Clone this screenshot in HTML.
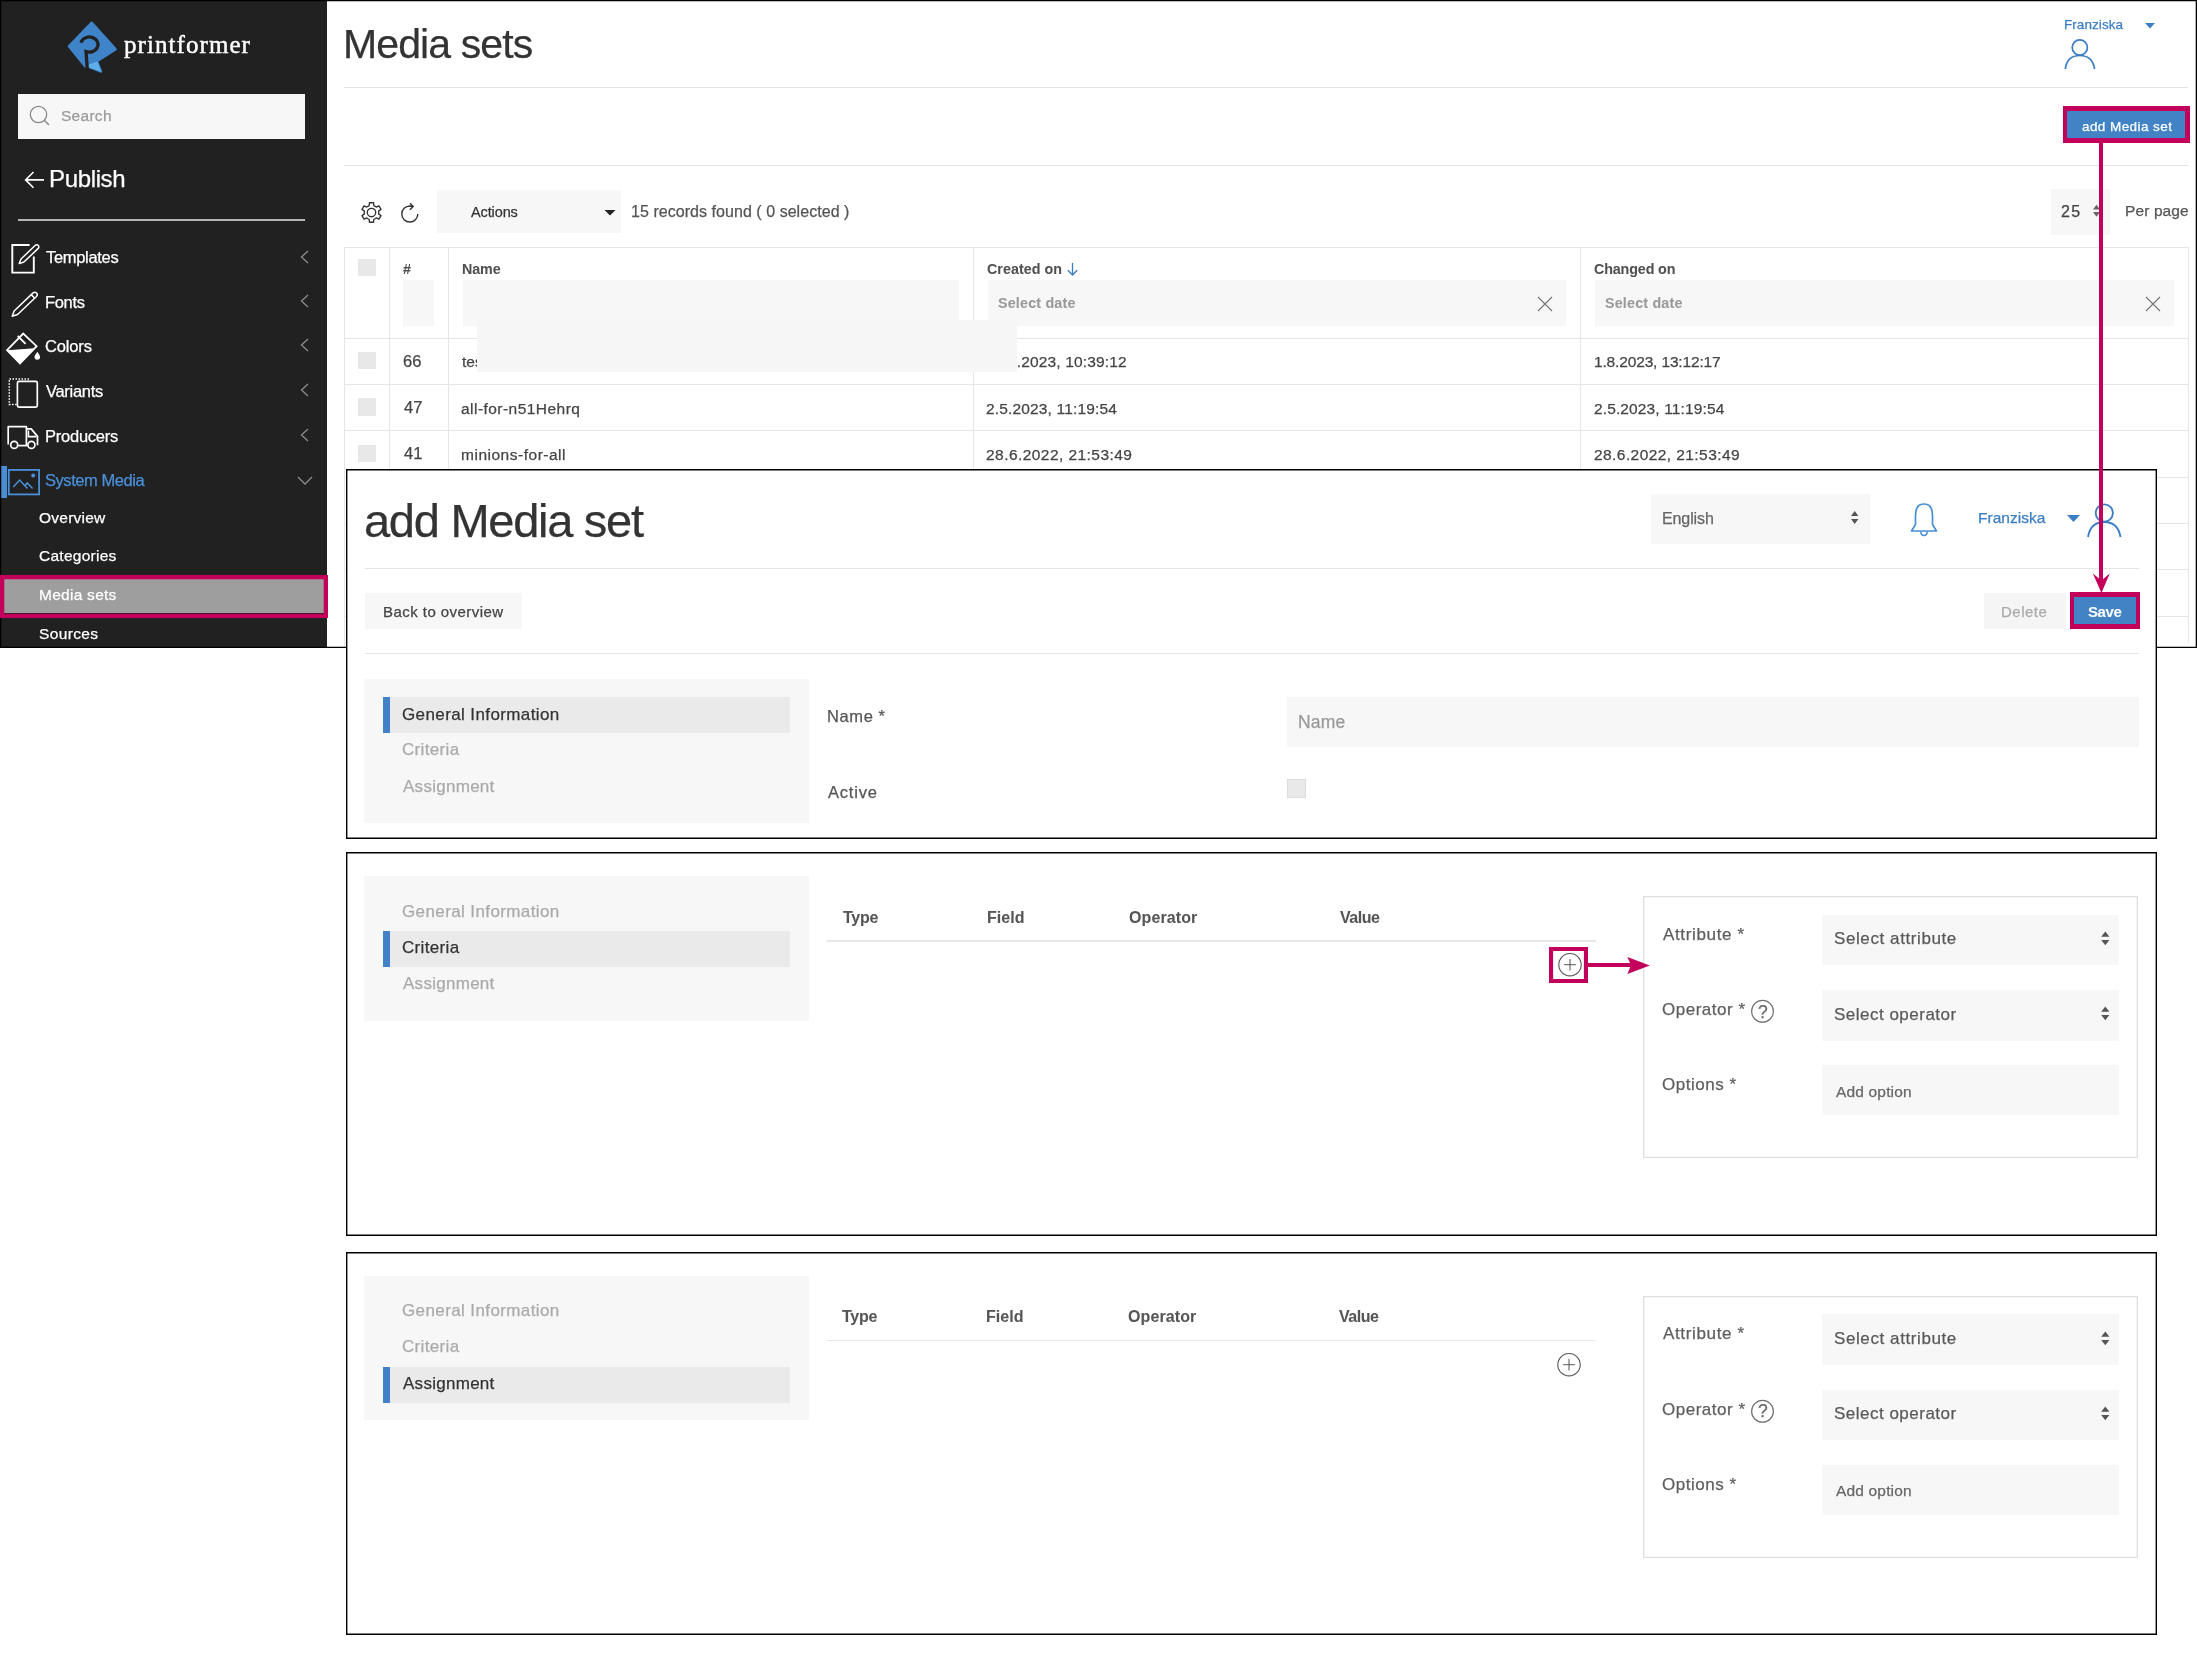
<!DOCTYPE html>
<html><head><meta charset="utf-8"><title>Media sets</title>
<style>
html,body{margin:0;padding:0;background:#fff;width:2197px;height:1654px;overflow:hidden;position:relative}
.a{position:absolute;box-sizing:border-box}
.t{position:absolute;white-space:pre;will-change:transform;-webkit-text-stroke:0.25px currentColor}
.b{-webkit-text-stroke:0.05px currentColor}
svg.a{overflow:visible}
</style></head><body>
<div class='a' style='left:0px;top:0px;width:2197px;height:648px;background:#fff;'></div>
<div class='a' style='left:0px;top:0px;width:327px;height:648px;background:#212121;'></div>
<svg class='a' style='left:62px;top:18px' width='60' height='60' viewBox='0 0 60 60'>
<path d='M29.7 4.6 L53.8 31.2 L35 43.2 L39.2 53.6 L26.8 49 L23 48.3 L6.8 28.3 Z' fill='#3f83c9' stroke='#3f83c9' stroke-width='2.2' stroke-linejoin='round'/>
<path d='M26.2 46.8 L35.2 43.5 L39.3 53.8 L26.2 49.2 Z' fill='#5eaee8'/>
<path d='M19.4 23.4 A 8.7 7.6 0 1 1 24 33.6 L25.3 51' fill='none' stroke='#212121' stroke-width='3.3' stroke-linecap='round' stroke-linejoin='miter'/>
</svg>
<div class='t' style='left:123.80px;top:25.56px;font-family:"Liberation Serif";font-size:25px;line-height:38px;font-weight:400;color:#fff;letter-spacing:1.070px;-webkit-text-stroke:0.45px #fff'>printformer</div>
<div class='a' style='left:18px;top:94px;width:287px;height:45px;background:#f7f7f7;'></div>
<svg class='a' style='left:29px;top:105px' width='22' height='22' viewBox='0 0 22 22'><circle cx='9.5' cy='9.5' r='8.2' fill='none' stroke='#8a8a8a' stroke-width='1.3'/><path d='M15.3 15.3 L20 20' stroke='#8a8a8a' stroke-width='1.4'/></svg>
<div class='t' style='left:61.00px;top:104.03px;font-family:"Liberation Sans";font-size:15.5px;line-height:23px;font-weight:400;color:#9a9a9a;letter-spacing:0.280px;'>Search</div>
<svg class='a' style='left:23px;top:170px' width='23' height='20' viewBox='0 0 23 20'><path d='M21 9.9 H3 M10.5 2 L2.6 9.9 L10.5 17.8' fill='none' stroke='#fff' stroke-width='1.6'/></svg>
<div class='t' style='left:49.00px;top:160.68px;font-family:"Liberation Sans";font-size:24px;line-height:36px;font-weight:400;color:#fff;letter-spacing:-0.350px;'>Publish</div>
<div class='a' style='left:18px;top:219px;width:287px;height:2px;background:#b4b4b4;'></div>
<div class='t' style='left:46.20px;top:245.28px;font-family:"Liberation Sans";font-size:16.5px;line-height:25px;font-weight:400;color:#fff;letter-spacing:-0.312px;'>Templates</div>
<svg class='a' style='left:298px;top:248.5px' width='14' height='16' viewBox='0 0 14 16'><path d='M10 2 L3.5 8 L10 14' fill='none' stroke='#8c8c8c' stroke-width='1.3'/></svg>
<div class='t' style='left:45.20px;top:289.78px;font-family:"Liberation Sans";font-size:16.5px;line-height:25px;font-weight:400;color:#fff;letter-spacing:-0.325px;'>Fonts</div>
<svg class='a' style='left:298px;top:293px' width='14' height='16' viewBox='0 0 14 16'><path d='M10 2 L3.5 8 L10 14' fill='none' stroke='#8c8c8c' stroke-width='1.3'/></svg>
<div class='t' style='left:45.20px;top:334.18px;font-family:"Liberation Sans";font-size:16.5px;line-height:25px;font-weight:400;color:#fff;letter-spacing:-0.160px;'>Colors</div>
<svg class='a' style='left:298px;top:337.4px' width='14' height='16' viewBox='0 0 14 16'><path d='M10 2 L3.5 8 L10 14' fill='none' stroke='#8c8c8c' stroke-width='1.3'/></svg>
<div class='t' style='left:46.20px;top:379.08px;font-family:"Liberation Sans";font-size:16.5px;line-height:25px;font-weight:400;color:#fff;letter-spacing:-0.300px;'>Variants</div>
<svg class='a' style='left:298px;top:382.3px' width='14' height='16' viewBox='0 0 14 16'><path d='M10 2 L3.5 8 L10 14' fill='none' stroke='#8c8c8c' stroke-width='1.3'/></svg>
<div class='t' style='left:45.20px;top:423.58px;font-family:"Liberation Sans";font-size:16.5px;line-height:25px;font-weight:400;color:#fff;letter-spacing:-0.238px;'>Producers</div>
<svg class='a' style='left:298px;top:426.8px' width='14' height='16' viewBox='0 0 14 16'><path d='M10 2 L3.5 8 L10 14' fill='none' stroke='#8c8c8c' stroke-width='1.3'/></svg>
<div class='t' style='left:45.20px;top:467.98px;font-family:"Liberation Sans";font-size:16.5px;line-height:25px;font-weight:400;color:#4a90d9;letter-spacing:-0.445px;'>System Media</div>
<svg class='a' style='left:296px;top:474px' width='18' height='12' viewBox='0 0 18 12'><path d='M2 3 L9 10 L16 3' fill='none' stroke='#8c8c8c' stroke-width='1.3'/></svg>
<svg class='a' style='left:0px;top:0px' width='50' height='660' viewBox='0 0 50 660'>
<path d='M29.6 245 H12.3 V272.6 H33.8 V256.5' fill='none' stroke='#fff' stroke-width='1.9'/>
<path d='M19.20 263.60 L23.91 262.02 L38.23 248.37 A2.1 2.1 0 0 0 35.33 245.33 L21.01 258.98 Z' fill='#212121' stroke='#fff' stroke-width='1.5' stroke-linejoin='round'/>
<path d='M12.20 316.20 L17.55 314.57 L36.51 296.53 A2.5 2.5 0 0 0 33.07 292.91 L14.10 310.94 Z M34.70 298.26 L31.25 294.63' fill='none' stroke='#fff' stroke-width='1.5' stroke-linejoin='round'/>
<path d='M7.1 350.2 L23.2 333.6 L36.6 346.2 L20 363.5 Z' fill='none' stroke='#fff' stroke-width='1.8' stroke-linejoin='miter'/>
<path d='M7.1 350.2 L34.5 348.3 L20 363.5 Z' fill='#fff'/>
<path d='M17.7 336 L25.6 343.9' stroke='#fff' stroke-width='1.8'/>
<path d='M37.3 351.7 Q40.4 355.8 40.1 357.4 Q39.8 359.7 37.3 359.7 Q34.8 359.7 34.5 357.4 Q34.2 355.8 37.3 351.7 Z' fill='#fff'/>
<rect x='17.4' y='381.3' width='19.9' height='25.9' rx='1.6' fill='none' stroke='#fff' stroke-width='1.7'/>
<path d='M16.6 404.4 H9.3 V378.9 H29' fill='none' stroke='#fff' stroke-width='1.5' stroke-dasharray='1.5 1.5'/>
<path d='M8.2 444.5 V426.6 H26.4 V445 M26.4 428.9 H31.2 L37.5 436.4 V445.2' fill='none' stroke='#fff' stroke-width='1.7' stroke-linejoin='round'/>
<path d='M28.4 430.6 V436.6 H36.4' fill='none' stroke='#fff' stroke-width='1.6'/>
<path d='M18.2 445.6 H27.5' stroke='#fff' stroke-width='1.7'/>
<circle cx='14.2' cy='444.9' r='3.5' fill='#212121' stroke='#fff' stroke-width='1.7'/>
<circle cx='31.4' cy='444.9' r='3.5' fill='#212121' stroke='#fff' stroke-width='1.7'/>
<rect x='8.8' y='469.9' width='30.3' height='24.5' fill='none' stroke='#4a90d9' stroke-width='1.8'/>
<path d='M13.3 486.9 L19.6 480.1 L27.5 488.6 M24.9 485.8 L27.2 483 L32.6 488.6' fill='none' stroke='#4a90d9' stroke-width='1.5'/>
<circle cx='33.2' cy='475.6' r='2' fill='#4a90d9'/>
</svg>
<div class='a' style='left:1px;top:465.7px;width:5.6px;height:32.80000000000001px;background:#4a8fd6;'></div>
<div class='a' style='left:4.3px;top:579.3px;width:319.7px;height:34.200000000000045px;background:#9e9e9e;'></div>
<div class='t' style='left:39.00px;top:506.03px;font-family:"Liberation Sans";font-size:15.5px;line-height:23px;font-weight:400;color:#fff;letter-spacing:0.243px;'>Overview</div>
<div class='t' style='left:39.00px;top:544.43px;font-family:"Liberation Sans";font-size:15.5px;line-height:23px;font-weight:400;color:#fff;letter-spacing:0.267px;'>Categories</div>
<div class='t' style='left:39.00px;top:583.43px;font-family:"Liberation Sans";font-size:15.5px;line-height:23px;font-weight:400;color:#fff;letter-spacing:0.267px;'>Media sets</div>
<div class='t' style='left:39.00px;top:621.83px;font-family:"Liberation Sans";font-size:15.5px;line-height:23px;font-weight:400;color:#fff;letter-spacing:0.367px;'>Sources</div>
<div class='t' style='left:342.70px;top:13.09px;font-family:"Liberation Sans";font-size:41px;line-height:62px;font-weight:400;color:#333;letter-spacing:-0.889px;'>Media sets</div>
<div class='a' style='left:344px;top:87px;width:1844px;height:1px;background:#e3e3e3;'></div>
<div class='a' style='left:344px;top:165px;width:1844px;height:1px;background:#e3e3e3;'></div>
<div class='t' style='left:2063.70px;top:14.82px;font-family:"Liberation Sans";font-size:13.5px;line-height:20px;font-weight:400;color:#3b7dc4;letter-spacing:0.062px;'>Franziska</div>
<svg class='a' style='left:2144px;top:22px' width='12' height='8' viewBox='0 0 12 8'><path d='M1 1 H11 L6 6.5 Z' fill='#3b7dc4'/></svg>
<svg class='a' style='left:2062px;top:38px' width='36' height='34' viewBox='0 0 36 34'><circle cx='17.8' cy='9.4' r='7.6' fill='none' stroke='#3b7dc4' stroke-width='1.7'/><path d='M3.3 31 Q5 17.5 17.8 17.5 Q30.5 17.5 32.6 31' fill='none' stroke='#3b7dc4' stroke-width='1.7'/></svg>
<div class='a' style='left:2063px;top:106.4px;width:126.69999999999982px;height:36.19999999999999px;background:#c2005b;'></div>
<div class='a' style='left:2067.4px;top:110.8px;width:118.0px;height:27.500000000000014px;background:#4183c5;'></div>
<div class='t' style='left:2081.60px;top:117.02px;font-family:"Liberation Sans";font-size:13.5px;line-height:20px;font-weight:400;color:#fff;letter-spacing:0.425px;'>add Media set</div>
<svg class='a' style='left:360px;top:201.3px' width='23' height='23' viewBox='0 0 23 23'><path d='M7.90 5.26 L9.16 4.69 L9.42 1.72 L13.58 1.72 L13.84 4.69 L15.10 5.26 L16.22 6.07 L18.93 4.81 L21.01 8.41 L18.57 10.13 L18.70 11.50 L18.57 12.87 L21.01 14.59 L18.93 18.19 L16.22 16.93 L15.10 17.74 L13.84 18.31 L13.58 21.28 L9.42 21.28 L9.16 18.31 L7.90 17.74 L6.78 16.93 L4.07 18.19 L1.99 14.59 L4.43 12.87 L4.30 11.50 L4.43 10.13 L1.99 8.41 L4.07 4.81 L6.78 6.07 Z' fill='none' stroke='#333' stroke-width='1.35' stroke-linejoin='round'/><circle cx='11.5' cy='11.5' r='4.2' fill='none' stroke='#333' stroke-width='1.35'/></svg>
<svg class='a' style='left:398px;top:201px' width='24' height='24' viewBox='0 0 24 24'><path d='M19.8 13 A 8 8 0 1 1 11.8 5 L14.6 5.2' fill='none' stroke='#333' stroke-width='1.4'/><path d='M12 2.2 L15.2 5.4 L11.8 8.7' fill='none' stroke='#333' stroke-width='1.4'/></svg>
<div class='a' style='left:437.4px;top:189.6px;width:183.60000000000002px;height:43.70000000000002px;background:#f7f7f7;'></div>
<div class='t' style='left:470.80px;top:200.58px;font-family:"Liberation Sans";font-size:14.5px;line-height:22px;font-weight:400;color:#333;letter-spacing:-0.117px;'>Actions</div>
<svg class='a' style='left:603px;top:209px' width='14' height='8' viewBox='0 0 14 8'><path d='M1.5 1 H12.5 L7 6.5 Z' fill='#222'/></svg>
<div class='t' style='left:631.30px;top:199.56px;font-family:"Liberation Sans";font-size:16px;line-height:24px;font-weight:400;color:#555;letter-spacing:0.047px;'>15 records found ( 0 selected )</div>
<div class='a' style='left:2050.6px;top:189.2px;width:59.40000000000009px;height:45.80000000000001px;background:#f7f7f7;'></div>
<div class='t' style='left:2060.90px;top:199.96px;font-family:"Liberation Sans";font-size:16px;line-height:24px;font-weight:400;color:#444;letter-spacing:1.400px;'>25</div>
<svg class='a' style='left:2092px;top:204px' width='9' height='14' viewBox='0 0 9 14'><path d='M1 5.5 L4.5 0.8 L8 5.5 Z M1 8 L4.5 12.7 L8 8 Z' fill='#666'/></svg>
<div class='t' style='left:2125.00px;top:199.13px;font-family:"Liberation Sans";font-size:15.5px;line-height:23px;font-weight:400;color:#555;letter-spacing:0.114px;'>Per page</div>
<div class='a' style='left:344px;top:247px;width:1px;height:401px;background:#e5e5e5;'></div>
<div class='a' style='left:2188px;top:247px;width:1px;height:395px;background:#e5e5e5;'></div>
<div class='a' style='left:344px;top:246.5px;width:1845px;height:1.0px;background:#e5e5e5;'></div>
<div class='a' style='left:389px;top:247px;width:1px;height:401px;background:#e5e5e5;'></div>
<div class='a' style='left:447.5px;top:247px;width:1.0px;height:401px;background:#e5e5e5;'></div>
<div class='a' style='left:973px;top:247px;width:1px;height:401px;background:#e5e5e5;'></div>
<div class='a' style='left:1580px;top:247px;width:1px;height:401px;background:#e5e5e5;'></div>
<div class='a' style='left:344px;top:338px;width:1845px;height:1px;background:#e5e5e5;'></div>
<div class='a' style='left:344px;top:384px;width:1845px;height:1px;background:#e5e5e5;'></div>
<div class='a' style='left:344px;top:430px;width:1845px;height:1px;background:#e5e5e5;'></div>
<div class='a' style='left:344px;top:476.8px;width:1845px;height:1.0px;background:#e5e5e5;'></div>
<div class='a' style='left:344px;top:523.2px;width:1845px;height:1.0px;background:#e5e5e5;'></div>
<div class='a' style='left:344px;top:569px;width:1845px;height:1px;background:#e5e5e5;'></div>
<div class='a' style='left:344px;top:615.8px;width:1845px;height:1.0px;background:#e5e5e5;'></div>
<div class='a' style='left:358.2px;top:258.5px;width:17.80000000000001px;height:17.5px;background:#e8e8e8;'></div>
<div class='t b' style='left:403.00px;top:258.75px;font-family:"Liberation Sans";font-size:14.3px;line-height:21px;font-weight:700;color:#505050;letter-spacing:0.000px;'>#</div>
<div class='t b' style='left:461.50px;top:258.75px;font-family:"Liberation Sans";font-size:14.3px;line-height:21px;font-weight:700;color:#505050;letter-spacing:-0.100px;'>Name</div>
<div class='t b' style='left:986.70px;top:258.95px;font-family:"Liberation Sans";font-size:14.3px;line-height:21px;font-weight:700;color:#505050;letter-spacing:0.033px;'>Created on</div>
<svg class='a' style='left:1066px;top:262px' width='13' height='15' viewBox='0 0 13 15'><path d='M6.5 1 V13 M1.8 8.3 L6.5 13 L11.2 8.3' fill='none' stroke='#3b7dc4' stroke-width='1.3'/></svg>
<div class='t b' style='left:1593.80px;top:258.75px;font-family:"Liberation Sans";font-size:14.3px;line-height:21px;font-weight:700;color:#505050;letter-spacing:-0.133px;'>Changed on</div>
<div class='a' style='left:403px;top:280.4px;width:31.19999999999999px;height:46.10000000000002px;background:#f7f7f7;'></div>
<div class='a' style='left:462.5px;top:280.4px;width:496.5px;height:46.10000000000002px;background:#f7f7f7;'></div>
<div class='a' style='left:987.5px;top:280.4px;width:578.5px;height:46.10000000000002px;background:#f7f7f7;'></div>
<div class='a' style='left:1594.8px;top:280.4px;width:579.6000000000001px;height:46.10000000000002px;background:#f7f7f7;'></div>
<div class='t b' style='left:997.50px;top:293.15px;font-family:"Liberation Sans";font-size:14.3px;line-height:21px;font-weight:700;color:#999;letter-spacing:0.190px;'>Select date</div>
<div class='t b' style='left:1604.80px;top:293.15px;font-family:"Liberation Sans";font-size:14.3px;line-height:21px;font-weight:700;color:#999;letter-spacing:0.190px;'>Select date</div>
<svg class='a' style='left:1537px;top:295.5px' width='16' height='16' viewBox='0 0 16 16'><path d='M1 1 L15 15 M15 1 L1 15' stroke='#777' stroke-width='1.2'/></svg>
<svg class='a' style='left:2144.5px;top:295.5px' width='16' height='16' viewBox='0 0 16 16'><path d='M1 1 L15 15 M15 1 L1 15' stroke='#777' stroke-width='1.2'/></svg>
<div class='a' style='left:358.2px;top:352.1px;width:17.80000000000001px;height:17.399999999999977px;background:#e8e8e8;'></div>
<div class='t' style='left:402.70px;top:348.98px;font-family:"Liberation Sans";font-size:16.5px;line-height:25px;font-weight:400;color:#444;letter-spacing:0.000px;'>66</div>
<div class='t' style='left:462.10px;top:350.33px;font-family:"Liberation Sans";font-size:15.5px;line-height:23px;font-weight:400;color:#444;letter-spacing:0.000px;'>test-something</div>
<div class='t' style='left:986.00px;top:350.33px;font-family:"Liberation Sans";font-size:15.5px;line-height:23px;font-weight:400;color:#444;letter-spacing:0.150px;'>24.7.2023, 10:39:12</div>
<div class='t' style='left:1593.80px;top:350.33px;font-family:"Liberation Sans";font-size:15.5px;line-height:23px;font-weight:400;color:#444;letter-spacing:-0.153px;'>1.8.2023, 13:12:17</div>
<div class='a' style='left:358.2px;top:398.4px;width:17.80000000000001px;height:17.399999999999977px;background:#e8e8e8;'></div>
<div class='t' style='left:403.70px;top:395.18px;font-family:"Liberation Sans";font-size:16.5px;line-height:25px;font-weight:400;color:#444;letter-spacing:0.000px;'>47</div>
<div class='t' style='left:461.10px;top:396.53px;font-family:"Liberation Sans";font-size:15.5px;line-height:23px;font-weight:400;color:#444;letter-spacing:0.460px;'>all-for-n51Hehrq</div>
<div class='t' style='left:986.00px;top:396.53px;font-family:"Liberation Sans";font-size:15.5px;line-height:23px;font-weight:400;color:#444;letter-spacing:0.159px;'>2.5.2023, 11:19:54</div>
<div class='t' style='left:1593.80px;top:396.53px;font-family:"Liberation Sans";font-size:15.5px;line-height:23px;font-weight:400;color:#444;letter-spacing:0.129px;'>2.5.2023, 11:19:54</div>
<div class='a' style='left:358.2px;top:444.9px;width:17.80000000000001px;height:17.399999999999977px;background:#e8e8e8;'></div>
<div class='t' style='left:403.70px;top:441.38px;font-family:"Liberation Sans";font-size:16.5px;line-height:25px;font-weight:400;color:#444;letter-spacing:0.000px;'>41</div>
<div class='t' style='left:461.10px;top:442.73px;font-family:"Liberation Sans";font-size:15.5px;line-height:23px;font-weight:400;color:#444;letter-spacing:0.514px;'>minions-for-all</div>
<div class='t' style='left:986.00px;top:442.73px;font-family:"Liberation Sans";font-size:15.5px;line-height:23px;font-weight:400;color:#444;letter-spacing:0.444px;'>28.6.2022, 21:53:49</div>
<div class='t' style='left:1593.80px;top:442.73px;font-family:"Liberation Sans";font-size:15.5px;line-height:23px;font-weight:400;color:#444;letter-spacing:0.428px;'>28.6.2022, 21:53:49</div>
<div class='a' style='left:477px;top:320px;width:540px;height:52.2px;background:#f6f6f6'></div>
<div class='a' style='left:0px;top:0px;width:2197px;height:648px;box-shadow:inset 0 0 0 1.3px #000;'></div>
<div class='a' style='left:346px;top:469.3px;width:1811.3000000000002px;height:369.49999999999994px;background:#fff;box-shadow:inset 0 0 0 1.4px #000;'></div>
<div class='t' style='left:364.20px;top:486.01px;font-family:"Liberation Sans";font-size:47px;line-height:70px;font-weight:400;color:#333;letter-spacing:-1.267px;'>add Media set</div>
<div class='a' style='left:1651.1px;top:493.7px;width:218.5px;height:50.19999999999999px;background:#f7f7f7;'></div>
<div class='t' style='left:1662.00px;top:506.96px;font-family:"Liberation Sans";font-size:16px;line-height:24px;font-weight:400;color:#666;letter-spacing:-0.100px;'>English</div>
<svg class='a' style='left:1850px;top:510px' width='10' height='16' viewBox='0 0 10 16'><path d='M1 6 L4.7 1 L8.4 6 Z M1 9 L4.7 14 L8.4 9 Z' fill='#555'/></svg>
<svg class='a' style='left:1907px;top:500px' width='34' height='38' viewBox='0 0 34 38'><path d='M4.5 31 L8.5 24.5 V15.5 Q8.5 4 17 4 Q25.5 4 25.5 15.5 V24.5 L29.5 31 Z' fill='none' stroke='#4a8fd6' stroke-width='1.7' stroke-linejoin='round'/><path d='M13.8 31.5 Q14 35.5 17 35.5 Q20 35.5 20.2 31.5' fill='none' stroke='#4a8fd6' stroke-width='1.6'/></svg>
<div class='t' style='left:1977.50px;top:506.43px;font-family:"Liberation Sans";font-size:15.5px;line-height:23px;font-weight:400;color:#3b7dc4;letter-spacing:0.025px;'>Franziska</div>
<svg class='a' style='left:2066px;top:514px' width='16' height='10' viewBox='0 0 16 10'><path d='M1 1 H14 L7.5 8 Z' fill='#3b7dc4'/></svg>
<svg class='a' style='left:2085px;top:501px' width='38' height='38' viewBox='0 0 38 38'><circle cx='19.3' cy='12' r='8.6' fill='none' stroke='#3b7dc4' stroke-width='1.8'/><path d='M3 36 Q5.5 21 19.3 21 Q33 21 35.5 36' fill='none' stroke='#3b7dc4' stroke-width='1.8'/></svg>
<div class='a' style='left:365px;top:567.5px;width:1774.4px;height:1.0px;background:#e5e5e5;'></div>
<div class='a' style='left:365px;top:593px;width:156.89999999999998px;height:35.799999999999955px;background:#f7f7f7;'></div>
<div class='t' style='left:383.20px;top:600.60px;font-family:"Liberation Sans";font-size:15px;line-height:22px;font-weight:400;color:#444;letter-spacing:0.453px;'>Back to overview</div>
<div class='a' style='left:1983.9px;top:592.9px;width:81.69999999999982px;height:35.700000000000045px;background:#f5f5f5;'></div>
<div class='t' style='left:2001.10px;top:601.10px;font-family:"Liberation Sans";font-size:15px;line-height:22px;font-weight:400;color:#aaa;letter-spacing:0.500px;'>Delete</div>
<div class='a' style='left:2069.6px;top:592.4px;width:70.30000000000018px;height:36.200000000000045px;background:#c2005b;'></div>
<div class='a' style='left:2073.9px;top:596.7px;width:61.69999999999982px;height:27.59999999999991px;background:#4183c5;'></div>
<div class='t b' style='left:2087.50px;top:601.10px;font-family:"Liberation Sans";font-size:15px;line-height:22px;font-weight:700;color:#fff;letter-spacing:-0.433px;'>Save</div>
<div class='a' style='left:365px;top:653.3px;width:1774.4px;height:1.0px;background:#e5e5e5;'></div>
<div class='a' style='left:364.3px;top:678.7px;width:444.7px;height:144.5999999999999px;background:#f7f7f7;'></div>
<div class='a' style='left:383px;top:697.3px;width:407.4px;height:36.0px;background:#eaeaea;'></div>
<div class='a' style='left:383px;top:697.3px;width:7px;height:36.0px;background:#4281c8;'></div>
<div class='t' style='left:401.90px;top:701.51px;font-family:"Liberation Sans";font-size:17px;line-height:26px;font-weight:400;color:#333;letter-spacing:0.389px;'>General Information</div>
<div class='t' style='left:401.90px;top:737.41px;font-family:"Liberation Sans";font-size:17px;line-height:26px;font-weight:400;color:#aaa;letter-spacing:0.329px;'>Criteria</div>
<div class='t' style='left:402.90px;top:773.91px;font-family:"Liberation Sans";font-size:17px;line-height:26px;font-weight:400;color:#aaa;letter-spacing:0.278px;'>Assignment</div>
<div class='t' style='left:826.60px;top:704.38px;font-family:"Liberation Sans";font-size:16.5px;line-height:25px;font-weight:400;color:#555;letter-spacing:0.600px;'>Name *</div>
<div class='t' style='left:827.60px;top:780.08px;font-family:"Liberation Sans";font-size:16.5px;line-height:25px;font-weight:400;color:#555;letter-spacing:0.780px;'>Active</div>
<div class='a' style='left:1287.4px;top:697.3px;width:851.9000000000001px;height:49.30000000000007px;background:#f7f7f7;'></div>
<div class='t' style='left:1297.50px;top:709.14px;font-family:"Liberation Sans";font-size:17.5px;line-height:26px;font-weight:400;color:#999;letter-spacing:0.167px;'>Name</div>
<div class='a' style='left:1287.4px;top:779.2px;width:18.399999999999864px;height:18.5px;background:#e9e9e9;box-shadow:inset 0 0 0 1px #dcdcdc;'></div>
<div class='a' style='left:346px;top:852.4px;width:1811.3000000000002px;height:383.6px;background:#fff;box-shadow:inset 0 0 0 1.4px #000;'></div>
<div class='a' style='left:364.3px;top:876.1px;width:444.7px;height:144.79999999999995px;background:#f7f7f7;'></div>
<div class='t' style='left:401.90px;top:898.71px;font-family:"Liberation Sans";font-size:17px;line-height:26px;font-weight:400;color:#aaa;letter-spacing:0.389px;'>General Information</div>
<div class='a' style='left:383px;top:931.0px;width:406.9px;height:36.0px;background:#eaeaea;'></div>
<div class='a' style='left:383px;top:931.0px;width:7px;height:36.0px;background:#4281c8;'></div>
<div class='t' style='left:401.90px;top:935.21px;font-family:"Liberation Sans";font-size:17px;line-height:26px;font-weight:400;color:#333;letter-spacing:0.329px;'>Criteria</div>
<div class='t' style='left:402.90px;top:971.41px;font-family:"Liberation Sans";font-size:17px;line-height:26px;font-weight:400;color:#aaa;letter-spacing:0.278px;'>Assignment</div>
<div class='t b' style='left:842.60px;top:905.96px;font-family:"Liberation Sans";font-size:16px;line-height:24px;font-weight:700;color:#555;letter-spacing:-0.233px;'>Type</div>
<div class='t b' style='left:986.50px;top:905.96px;font-family:"Liberation Sans";font-size:16px;line-height:24px;font-weight:700;color:#555;letter-spacing:0.075px;'>Field</div>
<div class='t b' style='left:1128.50px;top:905.96px;font-family:"Liberation Sans";font-size:16px;line-height:24px;font-weight:700;color:#555;letter-spacing:0.100px;'>Operator</div>
<div class='t b' style='left:1340.00px;top:905.96px;font-family:"Liberation Sans";font-size:16px;line-height:24px;font-weight:700;color:#555;letter-spacing:-0.500px;'>Value</div>
<div class='a' style='left:826.6px;top:940px;width:769.1px;height:1.7999999999999545px;background:#e8e8e8;'></div>
<svg class='a' style='left:1556.5px;top:952.4px' width='26' height='26' viewBox='0 0 26 26'><circle cx='13' cy='12.7' r='11.2' fill='none' stroke='#555' stroke-width='1.1'/><path d='M13 6.9 V18.5 M7.1 12.7 H18.9' stroke='#555' stroke-width='1'/></svg>
<div class='a' style='left:1643.4px;top:896.4px;width:494.5999999999999px;height:261.9px;box-shadow:inset 0 0 0 1.3px #dedede;'></div>
<div class='t' style='left:1662.60px;top:921.81px;font-family:"Liberation Sans";font-size:17px;line-height:26px;font-weight:400;color:#5e5e5e;letter-spacing:0.650px;'>Attribute *</div>
<div class='a' style='left:1821.6px;top:914.8px;width:297.7000000000003px;height:50.5px;background:#f7f7f7;'></div>
<div class='t' style='left:1833.80px;top:926.31px;font-family:"Liberation Sans";font-size:17px;line-height:26px;font-weight:400;color:#5a5a5a;letter-spacing:0.593px;'>Select attribute</div>
<svg class='a' style='left:2100px;top:930px' width='11' height='18' viewBox='0 0 11 18'><path d='M1.2 6.8 L5.3 1.5 L9.4 6.8 Z M1.2 10 L5.3 15.3 L9.4 10 Z' fill='#555'/></svg>
<div class='t' style='left:1661.60px;top:997.11px;font-family:"Liberation Sans";font-size:17px;line-height:26px;font-weight:400;color:#5e5e5e;letter-spacing:0.511px;'>Operator *</div>
<svg class='a' style='left:1750px;top:999px' width='26' height='26' viewBox='0 0 26 26'><circle cx='12.5' cy='12.3' r='10.9' fill='none' stroke='#707070' stroke-width='1.2'/></svg>
<div class='t' style='left:1757.60px;top:998.54px;font-family:"Liberation Sans";font-size:17.5px;line-height:26px;font-weight:400;color:#666;letter-spacing:0.000px;'>?</div>
<div class='a' style='left:1821.6px;top:990px;width:297.7000000000003px;height:50.5px;background:#f7f7f7;'></div>
<div class='t' style='left:1833.80px;top:1001.51px;font-family:"Liberation Sans";font-size:17px;line-height:26px;font-weight:400;color:#5a5a5a;letter-spacing:0.493px;'>Select operator</div>
<svg class='a' style='left:2100px;top:1005px' width='11' height='18' viewBox='0 0 11 18'><path d='M1.2 6.8 L5.3 1.5 L9.4 6.8 Z M1.2 10 L5.3 15.3 L9.4 10 Z' fill='#555'/></svg>
<div class='t' style='left:1661.60px;top:1072.31px;font-family:"Liberation Sans";font-size:17px;line-height:26px;font-weight:400;color:#5e5e5e;letter-spacing:0.525px;'>Options *</div>
<div class='a' style='left:1821.6px;top:1065.3px;width:297.7000000000003px;height:50.200000000000045px;background:#f7f7f7;'></div>
<div class='t' style='left:1835.50px;top:1079.63px;font-family:"Liberation Sans";font-size:15.5px;line-height:23px;font-weight:400;color:#666;letter-spacing:0.167px;'>Add option</div>
<div class='a' style='left:346px;top:1251.9px;width:1811.3000000000002px;height:383.5999999999999px;background:#fff;box-shadow:inset 0 0 0 1.4px #000;'></div>
<div class='a' style='left:364.3px;top:1275.7px;width:444.7px;height:144.29999999999995px;background:#f7f7f7;'></div>
<div class='t' style='left:401.90px;top:1298.11px;font-family:"Liberation Sans";font-size:17px;line-height:26px;font-weight:400;color:#aaa;letter-spacing:0.389px;'>General Information</div>
<div class='t' style='left:401.90px;top:1334.31px;font-family:"Liberation Sans";font-size:17px;line-height:26px;font-weight:400;color:#aaa;letter-spacing:0.329px;'>Criteria</div>
<div class='a' style='left:383px;top:1366.5px;width:406.9px;height:36.0px;background:#eaeaea;'></div>
<div class='a' style='left:383px;top:1366.5px;width:7px;height:36.0px;background:#4281c8;'></div>
<div class='t' style='left:402.90px;top:1370.71px;font-family:"Liberation Sans";font-size:17px;line-height:26px;font-weight:400;color:#333;letter-spacing:0.278px;'>Assignment</div>
<div class='t b' style='left:841.60px;top:1305.46px;font-family:"Liberation Sans";font-size:16px;line-height:24px;font-weight:700;color:#555;letter-spacing:-0.233px;'>Type</div>
<div class='t b' style='left:985.50px;top:1305.46px;font-family:"Liberation Sans";font-size:16px;line-height:24px;font-weight:700;color:#555;letter-spacing:0.075px;'>Field</div>
<div class='t b' style='left:1127.50px;top:1305.46px;font-family:"Liberation Sans";font-size:16px;line-height:24px;font-weight:700;color:#555;letter-spacing:0.100px;'>Operator</div>
<div class='t b' style='left:1339.00px;top:1305.46px;font-family:"Liberation Sans";font-size:16px;line-height:24px;font-weight:700;color:#555;letter-spacing:-0.500px;'>Value</div>
<div class='a' style='left:826.6px;top:1339.5px;width:769.1px;height:1.7999999999999545px;background:#e8e8e8;'></div>
<svg class='a' style='left:1555.5px;top:1351.9px' width='26' height='26' viewBox='0 0 26 26'><circle cx='13' cy='12.7' r='11.2' fill='none' stroke='#555' stroke-width='1.1'/><path d='M13 6.9 V18.5 M7.1 12.7 H18.9' stroke='#555' stroke-width='1'/></svg>
<div class='a' style='left:1643.4px;top:1295.9px;width:494.5999999999999px;height:261.89999999999986px;box-shadow:inset 0 0 0 1.3px #dedede;'></div>
<div class='t' style='left:1662.60px;top:1321.31px;font-family:"Liberation Sans";font-size:17px;line-height:26px;font-weight:400;color:#5e5e5e;letter-spacing:0.650px;'>Attribute *</div>
<div class='a' style='left:1821.6px;top:1314.3px;width:297.7000000000003px;height:50.5px;background:#f7f7f7;'></div>
<div class='t' style='left:1833.80px;top:1325.81px;font-family:"Liberation Sans";font-size:17px;line-height:26px;font-weight:400;color:#5a5a5a;letter-spacing:0.593px;'>Select attribute</div>
<svg class='a' style='left:2100px;top:1329.5px' width='11' height='18' viewBox='0 0 11 18'><path d='M1.2 6.8 L5.3 1.5 L9.4 6.8 Z M1.2 10 L5.3 15.3 L9.4 10 Z' fill='#555'/></svg>
<div class='t' style='left:1661.60px;top:1396.61px;font-family:"Liberation Sans";font-size:17px;line-height:26px;font-weight:400;color:#5e5e5e;letter-spacing:0.511px;'>Operator *</div>
<svg class='a' style='left:1750px;top:1398.5px' width='26' height='26' viewBox='0 0 26 26'><circle cx='12.5' cy='12.3' r='10.9' fill='none' stroke='#707070' stroke-width='1.2'/></svg>
<div class='t' style='left:1757.60px;top:1398.04px;font-family:"Liberation Sans";font-size:17.5px;line-height:26px;font-weight:400;color:#666;letter-spacing:0.000px;'>?</div>
<div class='a' style='left:1821.6px;top:1389.5px;width:297.7000000000003px;height:50.5px;background:#f7f7f7;'></div>
<div class='t' style='left:1833.80px;top:1401.01px;font-family:"Liberation Sans";font-size:17px;line-height:26px;font-weight:400;color:#5a5a5a;letter-spacing:0.493px;'>Select operator</div>
<svg class='a' style='left:2100px;top:1404.5px' width='11' height='18' viewBox='0 0 11 18'><path d='M1.2 6.8 L5.3 1.5 L9.4 6.8 Z M1.2 10 L5.3 15.3 L9.4 10 Z' fill='#555'/></svg>
<div class='t' style='left:1661.60px;top:1471.81px;font-family:"Liberation Sans";font-size:17px;line-height:26px;font-weight:400;color:#5e5e5e;letter-spacing:0.525px;'>Options *</div>
<div class='a' style='left:1821.6px;top:1464.8px;width:297.7000000000003px;height:50.200000000000045px;background:#f7f7f7;'></div>
<div class='t' style='left:1835.50px;top:1479.13px;font-family:"Liberation Sans";font-size:15.5px;line-height:23px;font-weight:400;color:#666;letter-spacing:0.167px;'>Add option</div>
<div class='a' style='left:2099.3px;top:142px;width:4.099999999999909px;height:440px;background:#c2005b;'></div>
<svg class='a' style='left:2089px;top:570px' width='24' height='24' viewBox='0 0 24 24'><path d='M12.4 23 L3.9 3.5 L12.4 10.5 L20.8 3.5 Z' fill='#c2005b'/></svg>
<div class='a' style='left:0px;top:575px;width:328px;height:43px;box-shadow:inset 0 0 0 4.3px #c2005b;'></div>
<div class='a' style='left:1549.3px;top:947.1px;width:39.100000000000136px;height:35.799999999999955px;box-shadow:inset 0 0 0 4.1px #c2005b;'></div>
<div class='a' style='left:1588px;top:963px;width:45px;height:4.2999999999999545px;background:#c2005b;'></div>
<svg class='a' style='left:1620px;top:950px' width='32' height='30' viewBox='0 0 32 30'><path d='M29.8 15.4 L7.4 7 L11 15.2 L7.4 23.9 Z' fill='#c2005b'/></svg>
</body></html>
